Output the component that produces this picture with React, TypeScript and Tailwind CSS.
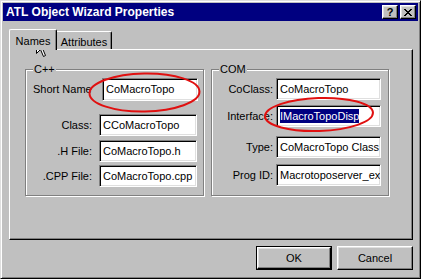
import React from "react";

const font = { fontFamily: '"Liberation Sans", Arial, sans-serif' };

// sunken white edit box, win95 style
function Field({ w, h = 22, children }: { w: number; h?: number; children: React.ReactNode }) {
  return (
    <div
      className="flex items-center bg-white border border-t-[#808080] border-l-[#808080] border-b-white border-r-white shadow-[inset_1px_1px_0_#000,inset_-1px_-1px_0_#dfdfdf] pl-[3px] text-[11px] text-black whitespace-nowrap overflow-hidden"
      style={{ width: w, height: h }}
    >
      {children}
    </div>
  );
}

function Group({ label, w, children }: { label: string; w: number; children: React.ReactNode }) {
  return (
    <div
      className="relative h-[127px] border border-[#808080] shadow-[inset_1px_1px_0_#fff,1px_1px_0_#fff] pl-[7px]"
      style={{ width: w }}
    >
      <span className="absolute left-[7px] -top-[8px] bg-[#c0c0c0] px-[1px] text-[11px] leading-[14px] text-black">
        {label}
      </span>
      {children}
    </div>
  );
}

function Row({ label, lw, gap, right, children, mt }: { label: string; lw: number; gap: number; right?: boolean; children: React.ReactNode; mt: number }) {
  return (
    <div className="flex items-center" style={{ marginTop: mt }}>
      <div className={`text-[11px] text-black whitespace-nowrap ${right ? "text-right" : "text-left"}`} style={{ width: lw, marginRight: gap }}>
        {label}
      </div>
      {children}
    </div>
  );
}

function Btn({ children, def }: { children: React.ReactNode; def?: boolean }) {
  return (
    <div className={`w-[76px] h-[24px] ${def ? "border border-black" : ""}`}>
      <div className="w-full h-full flex items-center justify-center border border-t-white border-l-white border-r-black border-b-black shadow-[inset_-1px_-1px_0_#808080,inset_1px_1px_0_#dfdfdf] text-[11px] text-black">
        {children}
      </div>
    </div>
  );
}

function CapBtn({ children }: { children: React.ReactNode }) {
  return (
    <div className="w-[16px] h-[14px] flex items-center justify-center bg-[#c0c0c0] border border-t-white border-l-white border-r-black border-b-black shadow-[inset_-1px_-1px_0_#808080,inset_1px_1px_0_#dfdfdf]">
      {children}
    </div>
  );
}

export default function App() {
  return (
    <div
      className="relative w-[421px] h-[279px] bg-[#c0c0c0] border border-t-[#dfdfdf] border-l-[#dfdfdf] border-r-black border-b-black shadow-[inset_1px_1px_0_#fff,inset_-1px_-1px_0_#808080] p-[2px] flex flex-col overflow-hidden"
      style={font}
    >
      {/* title bar */}
      <div className="h-[18px] bg-[#000080] flex items-center justify-between pl-[3px] pr-[2px]">
        <span className="text-white font-bold text-[12px] leading-none">ATL Object Wizard Properties</span>
        <div className="flex gap-[2px]">
          <CapBtn>
            <span className="text-[11px] font-bold leading-none text-black">?</span>
          </CapBtn>
          <CapBtn>
            <svg width="8" height="7" viewBox="0 0 8 7">
              <path d="M0 0h2v1h1v1h2V1h1V0h2v1H7v1H6v1H5v1h1v1h1v1h1v1H6V6H5V5H3v1H2v1H0V6h1V5h1V4h1V3H2V2H1V1H0z" fill="#000" />
            </svg>
          </CapBtn>
        </div>
      </div>

      {/* tabs */}
      <div className="mt-[8px] pl-[6px] flex items-end h-[20px]">
        <div className="relative z-10 w-[48px] h-[21px] -mb-[1px] bg-[#c0c0c0] border-l border-t border-r border-l-white border-t-white border-r-black rounded-tl-[2px] rounded-tr-[2px] shadow-[inset_-1px_0_0_#808080] flex items-start justify-center pt-[3px] text-[11px] text-black">
          Names
        </div>
        <div className="w-[55px] h-[18px] bg-[#c0c0c0] border-t border-r border-t-white border-r-black rounded-tr-[2px] shadow-[inset_-1px_0_0_#808080] flex items-start justify-center pt-[2px] text-[11px] text-black">
          Attributes
        </div>
      </div>

      {/* tab panel */}
      <div className="ml-[6px] w-[404px] h-[191px] border border-t-white border-l-white border-r-black border-b-black shadow-[inset_-1px_-1px_0_#808080] pt-[19px] pl-[15px] flex gap-[7px] items-start">
        <Group label="C++" w={179}>
          <Row label="Short Name" lw={69} gap={0} mt={8}>
            <Field w={96} h={23}>CoMacroTopo</Field>
          </Row>
          <Row label="Class:" lw={59} gap={7} right mt={13}>
            <Field w={98}>CCoMacroTopo</Field>
          </Row>
          <Row label=".H File:" lw={59} gap={7} right mt={4}>
            <Field w={98}>CoMacroTopo.h</Field>
          </Row>
          <Row label=".CPP File:" lw={59} gap={7} right mt={3}>
            <Field w={98}>CoMacroTopo.cpp</Field>
          </Row>
        </Group>
        <Group label="COM" w={178}>
          <Row label="CoClass:" lw={54} gap={3} right mt={8}>
            <Field w={105}>CoMacroTopo</Field>
          </Row>
          <Row label="Interface:" lw={54} gap={3} right mt={5}>
            <Field w={105}>
              <span className="bg-[#000080] text-white leading-[14px]">IMacroTopoDisp</span>
            </Field>
          </Row>
          <Row label="Type:" lw={54} gap={3} right mt={9}>
            <Field w={105}>CoMacroTopo Class</Field>
          </Row>
          <Row label="Prog ID:" lw={54} gap={3} right mt={6}>
            <Field w={105}>Macrotoposerver_ex</Field>
          </Row>
        </Group>
      </div>

      {/* buttons */}
      <div className="mt-[6px] pr-[5px] flex justify-end gap-[5px]">
        <Btn def>OK</Btn>
        <Btn>Cancel</Btn>
      </div>

      {/* red annotation ellipses */}
      <svg className="absolute left-0 top-0 pointer-events-none" width="421" height="279">
        <ellipse cx="143.5" cy="91.5" rx="55" ry="19" fill="none" stroke="#e01010" strokeWidth="2" transform="rotate(-1 143.5 91.5)" />
        <ellipse cx="318" cy="113.5" rx="54" ry="16.5" fill="none" stroke="#e01010" strokeWidth="2" transform="rotate(-2 318 113.5)" />
      </svg>

      {/* mouse pointer */}
      <svg className="absolute left-[35px] top-[36px] pointer-events-none" width="13" height="21" viewBox="0 0 13 21">
        <path d="M0.5 0.5V16.5L4.5 12.5L7.5 19.5L9.5 18.5L6.5 11.5H11.5Z" fill="#fff" stroke="#000" strokeWidth="1" />
      </svg>
    </div>
  );
}
